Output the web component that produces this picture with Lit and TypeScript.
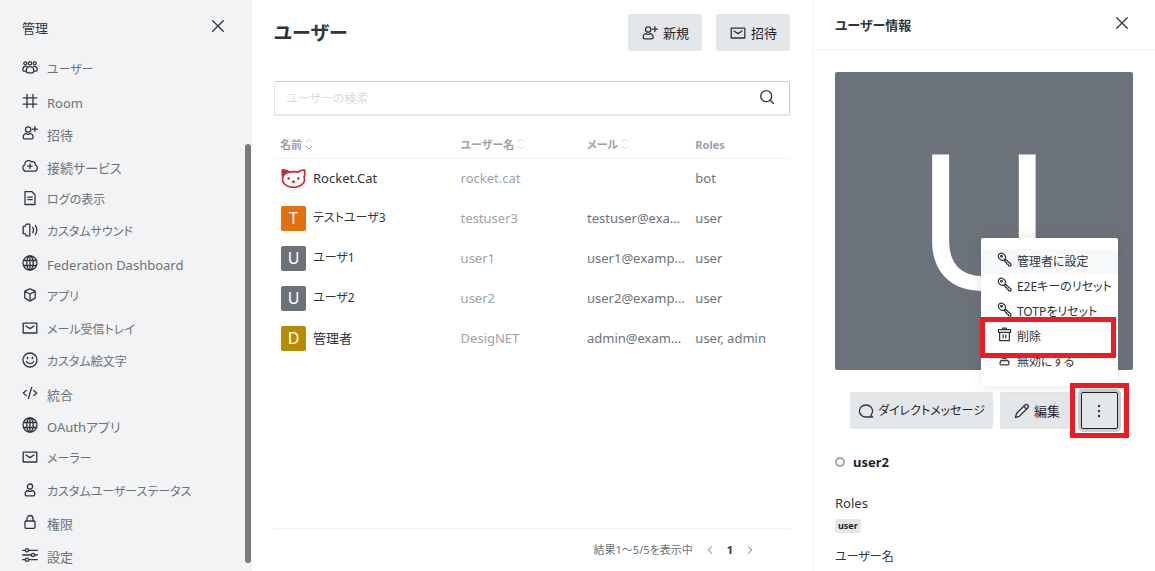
import { LitElement, html, css, svg, TemplateResult } from "lit";
import { customElement, property, state } from "lit/decorators.js";
import { classMap } from "lit/directives/class-map.js";

const ICONS: Record<string, TemplateResult> = {
  team: svg`<circle cx="3.3" cy="3.3" r="1.5"/><circle cx="8" cy="3.3" r="1.6"/><circle cx="12.7" cy="3.3" r="1.5"/><path d="M3.4 11.2H1.8C.9 11.2.7 9.7.9 8.6 1.1 7.2 2 6.4 3.4 6.4h.9M12.6 11.2h1.6c.9 0 1.1-1.500.9-2.600-.2-1.400-1.100-2.200-2.500-2.200h-.9"/><path d="M8 6.700c2.600 0 3.700 1.500 3.700 3.800 0 1.700-.4 2.300-1.500 2.300H5.800c-1.100 0-1.500-.6-1.500-2.300C4.300 8.200 5.400 6.700 8 6.700z"/>`,
  hash: svg`<path d="M5 1.500v13M11 1.500v13M1.200 4.800h13.600M1.200 11.200h13.600"/>`,
  userPlus: svg`<circle cx="6.200" cy="4.500" r="2.700"/><path d="M3.900 8.500C2.200 9 1.200 10.200 1.200 12v.6c0 .9.5 1.300 1.300 1.300h7.300c.8 0 1.300-.4 1.300-1.300V12c0-1.800-1-3-2.700-3.500-1.300 1-3.200 1-4.500 0zM12.900 1.600v5M10.400 4.100h5"/>`,
  cloud: svg`<path d="M4.300 13.200C2.300 13.200.8 11.700.8 9.800c0-1.500.8-2.600 2-3.100C2.900 4 4.600 2.600 6.600 2.600c1.100 0 2 .4 2.700 1.200 2.300-.6 4.200.9 4.100 3.200 1.200.5 1.900 1.500 1.900 2.900 0 1.900-1.400 3.300-3.300 3.300zM8 6v4.400M5.800 8.200h4.400"/>`,
  doc: svg`<path d="M3 1.700h7l3 3v9.800H3zM5.800 7.200h4.400M5.800 9.600h4.400"/>`,
  sound: svg`<path d="M1.200 4.300h2L4.200 2.200h3.600v11.600H4.200L3.200 11.700h-2zM10.800 5.400c.8 1.600.8 3.600 0 5.200M13.300 3.400c1.900 2.800 1.900 6.400 0 9.200"/>`,
  globe: svg`<circle cx="8" cy="8" r="7"/><ellipse cx="8" cy="8" rx="3.200" ry="7"/><path d="M8 1v14M1.700 5.500h12.600M1.700 10.500h12.600"/>`,
  cube: svg`<path d="M8 1.800l5.200 2.400v6.900L8 14.100l-5.200-3V4.200zM2.800 4.400L8 7l5.200-2.600M8 7v6.800"/>`,
  mail: svg`<path d="M1.200 3.200h13.600v9.800H1.200zM4 6L8 8.600 12 6"/>`,
  smile: svg`<circle cx="8" cy="8" r="7"/><path d="M4.400 9.500c1.300 2.700 5.900 2.700 7.200 0"/><path d="M5.600 5.600v.8M10.400 5.600v.8" stroke-width="1.600"/>`,
  code: svg`<path d="M4.300 5.500L1.300 8l3 2.500M11.700 5.500l3 2.500-3 2.500M9.700 2.500l-3.400 11"/>`,
  user: svg`<circle cx="8" cy="4.600" r="2.600"/><path d="M5.700 8.600C4 9.100 3.200 10.200 3.200 12v.5c0 .9.400 1.300 1.200 1.300h7.200c.8 0 1.200-.4 1.200-1.300V12c0-1.800-.8-2.900-2.500-3.400-1.400 1-3.200 1-4.600 0z"/>`,
  lock: svg`<rect x="3" y="7" width="10" height="7.300" rx="1"/><path d="M5 7V4.600C5 2.700 6.200 1.500 8 1.500s3 1.200 3 3.100V7"/>`,
  sliders: svg`<path d="M.7 3.300h2.700M6.700 3.300h8.600M.7 8h8.600M12.600 8h2.700M.7 12.700h2.700M6.700 12.700h8.600"/><circle cx="5" cy="3.300" r="1.600"/><circle cx="11" cy="8" r="1.600"/><circle cx="5" cy="12.700" r="1.600"/>`,
  close: svg`<path d="M2.700 2.700l10.600 10.600M13.300 2.700L2.700 13.300"/>`,
  search: svg`<circle cx="7.200" cy="7.200" r="5.500"/><path d="M11.200 11.200l3.300 3.300"/>`,
  chat: svg`<path d="M12.800 14H8c-3.800 0-6.600-2.500-6.600-6S4.200 2 8 2s6.600 2.500 6.600 6c0 1.600-.6 3-1.700 4.100l1.700 1.900z"/>`,
  pencil: svg`<path d="M1.500 14.500l1-4L11 2c.9-.9 2-.9 2.800-.1.900.9.900 2 0 2.900l-8.500 8.600zM9.700 3.400l2.900 2.900"/>`,
  dots: svg`<g fill="currentColor" stroke="none"><circle cx="8" cy="3" r="1.200"/><circle cx="8" cy="8" r="1.200"/><circle cx="8" cy="13" r="1.200"/></g>`,
  key: svg`<path d="M8 8.200C6.500 9.200 4.300 9 2.900 7.600 1.100 5.900 1 3.500 2.300 2.200 3.700.9 6.100 1.100 7.800 2.800 9.200 4.200 9.400 6.100 8.500 7.500l6.300 5.300v2h-2.300l-.5-1.600-1.400-.3-.4-1.500-1.300-.5z"/><circle cx="4.800" cy="4.600" r=".9"/>`,
  trash: svg`<path d="M1.500 2.800h13v3h-13zM6 2.800V1.300h4v1.500M2.800 5.800h10.400v8.700H2.800zM6.600 8.300v3.500M9.400 8.300v3.500"/>`,
  left: svg`<path d="M10 3.500L5.800 8l4.200 4.500"/>`,
  right: svg`<path d="M6 3.500L10.200 8 6 12.500"/>`,
};

const FONT = css`"Noto Sans", "Noto Sans CJK JP", sans-serif`;

const base = css`
  * { box-sizing: border-box; }
  button { font: inherit; font-feature-settings: inherit; color: inherit; border: 0; background: none; padding: 0; margin: 0; cursor: pointer; }
  a { color: inherit; text-decoration: none; }
  h1, h2, h3, p, ul, dl, dd { margin: 0; padding: 0; }
`;

@customElement("ui-icon")
class UiIcon extends LitElement {
  @property() name = "close";
  static styles = css`
    :host { display: block; flex: none; width: 16px; height: 16px; color: #2f343d; }
    svg { display: block; width: 100%; height: 100%; fill: none; stroke: currentColor; stroke-width: 1.3; stroke-linejoin: round; stroke-linecap: round; }
  `;
  render() {
    return html`<svg viewBox="0 0 16 16" aria-hidden="true">${ICONS[this.name]}</svg>`;
  }
}

const isKana = (label: string) => /^[\u3040-\u30ff]+/.test(label);

@customElement("admin-sidebar")
class AdminSidebar extends LitElement {
  private items = [
    ["team", "ユーザー"], ["hash", "Room"], ["userPlus", "招待"], ["cloud", "接続サービス"],
    ["doc", "ログの表示"], ["sound", "カスタムサウンド"], ["globe", "Federation Dashboard"], ["cube", "アプリ"],
    ["mail", "メール受信トレイ"], ["smile", "カスタム絵文字"], ["code", "統合"], ["globe", "OAuthアプリ"],
    ["mail", "メーラー"], ["user", "カスタムユーザーステータス"], ["lock", "権限"], ["sliders", "設定"],
  ];
  static styles = [base, css`
    :host { position: relative; display: flex; flex-direction: column; background: #f2f3f5; color: #6c727a; }
    .head { display: flex; align-items: center; justify-content: space-between; height: 52px; padding: 0 26px 0 22px; flex: none; }
    h2 { font-size: 13px; font-weight: 400; line-height: 20px; padding-top: 4px; color: #2f343d; }
    .list { flex: 1; min-height: 0; display: grid; grid-auto-rows: minmax(32px, 1fr); list-style: none; }
    .link { display: flex; align-items: center; gap: 9px; height: 100%; padding-left: 22px; }
    .link span { line-height: 20px; padding-top: 4px; white-space: nowrap; }
    .link .kana { font-size: 12px; }
    .thumb { position: absolute; top: 144px; bottom: 8px; right: 1px; width: 6px; border-radius: 3px; background: #7a7a7a; }
  `];
  render() {
    return html`
      <div class="head"><h2>管理</h2><button aria-label="閉じる"><ui-icon name="close"></ui-icon></button></div>
      <ul class="list">
        ${this.items.map(([icon, label]) => html`<li><a class="link" href="#"><ui-icon name=${icon}></ui-icon><span class=${classMap({ kana: isKana(label) })}>${label}</span></a></li>`)}
      </ul>
      <div class="thumb"></div>`;
  }
}

interface User { initial: string; tone: string; name: string; username: string; email: string; roles: string; }

@customElement("users-page")
class UsersPage extends LitElement {
  private users: User[] = [
    { initial: "", tone: "cat", name: "Rocket.Cat", username: "rocket.cat", email: "", roles: "bot" },
    { initial: "T", tone: "orange", name: "テストユーザ3", username: "testuser3", email: "testuser@example.com", roles: "user" },
    { initial: "U", tone: "gray", name: "ユーザ1", username: "user1", email: "user1@example.com", roles: "user" },
    { initial: "U", tone: "gray", name: "ユーザ2", username: "user2", email: "user2@example.com", roles: "user" },
    { initial: "D", tone: "gold", name: "管理者", username: "DesigNET", email: "admin@example.com", roles: "user, admin" },
  ];
  static styles = [base, css`
    :host { display: flex; flex-direction: column; min-width: 0; padding: 0 22px; background: #fff; }
    .head { display: flex; align-items: center; gap: 14px; padding: 14px 0 30px; }
    h1 { flex: 1; font-size: 19px; line-height: 30px; font-weight: 700; }
    .btn { display: flex; align-items: center; gap: 5px; height: 37px; padding: 0 13px 0 14px; background: #e4e7ea; border-radius: 2px; color: #1f2329; }
    .search { display: flex; align-items: center; height: 35px; padding: 0 14px 0 11px; border: 1px solid #cbced1; border-bottom: 2px solid #e4e7ea; border-left-color: #e4e7ea; border-radius: 2px; }
    .search input { flex: 1; min-width: 0; border: 0; outline: 0; padding: 2px 0 0; background: none; font: inherit; font-size: 12px; font-feature-settings: inherit; color: #2f343d; }
    .search input::placeholder { color: #d9dbdf; opacity: 1; }
    .search ui-icon { margin-bottom: 2px; }
    table { width: 100%; margin-top: 16px; table-layout: fixed; border-collapse: collapse; }
    .c-name { width: 35%; } .c-user { width: 24.500%; } .c-mail { width: 21%; }
    th { height: 26px; padding: 0 6px; border-bottom: 1px solid #f2f3f5; text-align: left; font-size: 11px; line-height: 16px; font-weight: 700; color: #9ea2a8; }
    .sort { display: flex; align-items: center; gap: 3px; font-weight: inherit; }
    .sort svg { width: 8px; height: 12px; margin-bottom: 2px; fill: none; stroke: #d5d8dc; stroke-width: 1; }
    .sort .on { stroke: #9ea2a8; }
    td { height: 40px; padding: 0 6px; color: #6c727a; overflow: hidden; text-overflow: ellipsis; white-space: nowrap; }
    .email { padding-right: 2px; }
    .muted { color: #9ea2a8; }
    .who { display: flex; align-items: center; gap: 7px; padding-left: 1px; color: #2f343d; }
    .kana { font-size: 12px; }
    .avatar { display: grid; place-items: center; flex: none; width: 25px; height: 25px; border-radius: 2px; color: #fff; font-size: 16px; line-height: 24px; }
    .orange { background: #e3700f; } .gray { background: #6c727a; } .gold { background: #b68d00; }
    .cat svg { width: 25px; height: 25px; }
    .foot { display: flex; align-items: center; justify-content: flex-end; gap: 11px; height: 43px; margin-top: auto; padding-right: 34px; border-top: 1px solid #f2f3f5; font-size: 11px; line-height: 18px; color: #6c727a; }
    .pages { display: flex; align-items: center; gap: 11px; }
    .pages ui-icon { width: 12px; height: 12px; color: #6c727a; }
    .current { font-size: 11px; font-weight: 700; color: #2f343d; }
  `];
  private sorter(active: boolean) {
    return html`<svg viewBox="0 0 8 12" aria-hidden="true"><path d="M1 4l3-3 3 3"/><path class=${classMap({ on: active })} d="M1 8l3 3 3-3"/></svg>`;
  }
  private cat() {
    return html`<svg viewBox="0 0 25 25" aria-hidden="true">
      <path d="M1.500 4C1 7 1.200 9.500 2 11c-1.300 3.600.4 7 4 8.700 4 2 9 2 13 0 3.600-1.700 5.300-5.100 4-8.700.8-1.500 1-4 .5-7-2.700-.1-5 .8-6.500 2.200-3-.7-6-.7-9 0C6.500 4.800 4.200 3.900 1.500 4z" fill="#fff" stroke="#cc2a2e" stroke-width="1.700"/>
      <path d="M1.200 3.500C5 3 7.700 4.400 9.300 6.500 6 7 3.200 9 2 11.300 1 9 .6 6.500 1.200 3.500z" fill="#cc2a2e"/>
      <g fill="#cc2a2e"><circle cx="7.700" cy="12.500" r="1.300"/><circle cx="17.300" cy="12.500" r="1.300"/><ellipse cx="12.500" cy="15.700" rx="1.200" ry="1.600"/></g>
      <path d="M9.500 15.300c.7.800 1.600.8 2 .1M13.500 15.400c.5.700 1.400.7 2-.1" fill="none" stroke="#cc2a2e" stroke-width=".5"/></svg>`;
  }
  render() {
    return html`
      <div class="head">
        <h1>ユーザー</h1>
        <button class="btn"><ui-icon name="userPlus"></ui-icon>新規</button>
        <button class="btn"><ui-icon name="mail"></ui-icon>招待</button>
      </div>
      <label class="search"><input type="text" aria-label="ユーザーの検索" placeholder="ユーザーの検索" /><ui-icon name="search"></ui-icon></label>
      <table>
        <thead><tr>
          <th class="c-name"><button class="sort">名前${this.sorter(true)}</button></th>
          <th class="c-user"><button class="sort">ユーザー名${this.sorter(false)}</button></th>
          <th class="c-mail"><button class="sort">メール${this.sorter(false)}</button></th>
          <th>Roles</th>
        </tr></thead>
        <tbody>
          ${this.users.map((u) => html`<tr>
            <td><div class="who"><span class="avatar ${u.tone}">${u.tone === "cat" ? this.cat() : u.initial}</span><span class=${classMap({ kana: isKana(u.name) })}>${u.name}</span></div></td>
            <td class="muted">${u.username}</td><td class="email">${u.email}</td><td>${u.roles}</td></tr>`)}
        </tbody>
      </table>
      <div class="foot">
        <span>結果1〜5/5を表示中</span>
        <nav class="pages">
          <button aria-label="前へ"><ui-icon name="left"></ui-icon></button>
          <button class="current">1</button>
          <button aria-label="次へ"><ui-icon name="right"></ui-icon></button>
        </nav>
      </div>`;
  }
}

@customElement("user-info")
class UserInfo extends LitElement {
  @state() private menuOpen = true;
  private actions = [
    { icon: "key", label: "管理者に設定", active: true, marked: false },
    { icon: "key", label: "E2Eキーのリセット", active: false, marked: false },
    { icon: "key", label: "TOTPをリセット", active: false, marked: false },
    { icon: "trash", label: "削除", active: false, marked: true },
    { icon: "user", label: "無効にする", active: false, marked: false },
  ];
  static styles = [base, css`
    :host { display: flex; flex-direction: column; min-width: 0; border-left: 1px solid #f2f3f5; background: #fff; overflow: hidden; }
    .head { display: flex; align-items: center; justify-content: space-between; flex: none; height: 50px; padding: 0 25px 0 22px; border-bottom: 1px solid #f2f3f5; }
    h2 { font-size: 13px; line-height: 20px; font-weight: 700; }
    .head ui-icon { margin-bottom: 4px; }
    .body { padding: 22px 22px 0; }
    .photo { display: grid; place-items: center; aspect-ratio: 1; padding-bottom: 10px; background: #6c727a; border-radius: 2px; color: #fff; font-size: 188px; line-height: 200px; }
    .row { display: flex; justify-content: center; margin-top: 22px; }
    .actions { position: relative; display: flex; gap: 7px; }
    .btn { display: flex; align-items: center; justify-content: center; gap: 4px; height: 37px; padding: 0 14px; background: #e4e7ea; border-radius: 2px; color: #1f2329; white-space: nowrap; }
    .long { padding: 0 8px; font-size: 12px; }
    .more { position: relative; width: 37px; padding: 0; border: 1px solid #1f2329; box-shadow: 0 0 0 3px #cbced1; }
    .mark { position: absolute; z-index: 2; border: 5px solid #ed1c24; pointer-events: none; }
    .mark-more { inset: -10px -12px; }
    .mark-item { inset: -7px 2px -9px -1px; }
    .menu { position: absolute; z-index: 1; right: 0; bottom: 43px; width: 137px; padding: 11px 0 12px; background: #fff; border-radius: 2px; box-shadow: 0 0 12px rgba(47, 52, 61, 0.12); font-size: 12px; }
    .item { position: relative; display: flex; align-items: center; gap: 5px; width: 100%; height: 25px; padding-left: 16px; white-space: nowrap; text-align: left; }
    .item ui-icon { width: 15px; height: 15px; margin-bottom: 4px; }
    .active { background: #f7f8fa; }
    .status { display: flex; align-items: center; gap: 8px; margin-top: 23px; }
    .dot { width: 10px; height: 10px; border: 2px solid #9ea2a8; border-radius: 50%; }
    h3 { font-size: 13px; line-height: 20px; font-weight: 700; color: #1f2329; }
    dl { margin-top: 21px; }
    dt { line-height: 20px; }
    .kana { font-size: 12px; }
    dd { margin: 6px 0 14px; line-height: 14px; }
    .tag { display: inline-block; vertical-align: top; padding: 0 3px; border-radius: 2px; background: #e4e7ea; font-size: 9px; line-height: 14px; font-weight: 700; color: #1f2329; }
  `];
  render() {
    return html`
      <div class="head"><h2>ユーザー情報</h2><button aria-label="閉じる"><ui-icon name="close"></ui-icon></button></div>
      <div class="body">
        <div class="photo">U</div>
        <div class="row"><div class="actions">
          <button class="btn long"><ui-icon name="chat"></ui-icon>ダイレクトメッセージ</button>
          <button class="btn"><ui-icon name="pencil"></ui-icon>編集</button>
          <button class="btn more" aria-label="その他" aria-expanded=${this.menuOpen} @click=${() => (this.menuOpen = !this.menuOpen)}>
            <ui-icon name="dots"></ui-icon><span class="mark mark-more"></span>
          </button>
          ${this.menuOpen ? html`<div class="menu" role="menu">
            ${this.actions.map((a) => html`<button role="menuitem" class=${classMap({ item: true, active: a.active })}>
              <ui-icon name=${a.icon}></ui-icon>${a.label}${a.marked ? html`<span class="mark mark-item"></span>` : ""}</button>`)}
          </div>` : ""}
        </div></div>
        <div class="status"><span class="dot"></span><h3>user2</h3></div>
        <dl><dt>Roles</dt><dd><span class="tag">user</span></dd><dt class="kana">ユーザー名</dt></dl>
      </div>`;
  }
}

@customElement("app-root")
class AppRoot extends LitElement {
  static styles = css`
    :host {
      display: grid; grid-template-columns: 252px minmax(0, 1fr) 343px; grid-template-rows: 100%; height: 100vh; overflow: hidden;
      font-family: ${FONT}; font-size: 13px; line-height: 20px; font-feature-settings: "palt"; color: #2f343d; background: #fff;
    }
  `;
  render() {
    return html`<admin-sidebar></admin-sidebar><users-page></users-page><user-info></user-info>`;
  }
}
